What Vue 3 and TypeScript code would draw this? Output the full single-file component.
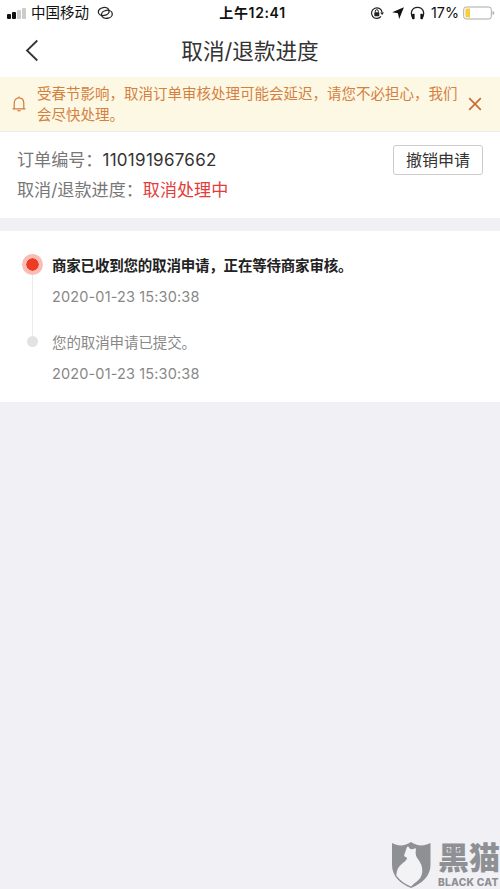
<script setup lang="ts">
interface Step {
  title: string
  time: string
  active: boolean
}

const orderNo = '110191967662'
const notice = '受春节影响，取消订单审核处理可能会延迟，请您不必担心，我们会尽快处理。'
const steps: Step[] = [
  { title: '商家已收到您的取消申请，正在等待商家审核。', time: '2020-01-23 15:30:38', active: true },
  { title: '您的取消申请已提交。', time: '2020-01-23 15:30:38', active: false },
]
</script>

<template>
  <div class="page">
    <header class="status">
      <div class="side">
        <span class="signal"><i class="b1"></i><i class="b2"></i><i class="b3 off"></i><i class="b4 off"></i></span>
        <span class="carrier">中国移动</span>
        <svg class="link" width="17" height="14" viewBox="0 0 17 14" fill="none" stroke="#222" stroke-width="1.3" stroke-linecap="round">
          <ellipse cx="6.700" cy="5.500" rx="5.400" ry="4" transform="rotate(-8 6.700 5.500)" />
          <ellipse cx="9.900" cy="8.300" rx="5.400" ry="4" transform="rotate(-8 9.900 8.300)" />
        </svg>
      </div>
      <div class="clock">上午12:41</div>
      <div class="side right">
        <svg width="14" height="14" viewBox="0 0 14 14" fill="none" stroke="#222" stroke-width="1.2">
          <path d="M11 10.400A5.300 5.300 0 1 1 12.100 6.500" />
          <path d="M10.200 6.400h3.800l-1.900 2.600z" fill="#222" stroke="none" />
          <rect x="4.300" y="6.300" width="5" height="3.900" rx=".6" fill="#222" stroke="none" />
          <path d="M5.300 6.500V5.200a1.500 1.500 0 0 1 3 0v1.300" stroke-width="1" />
        </svg>
        <svg class="arrow" width="12" height="12" viewBox="0 0 12 12"><path d="M11.900.2 7.200 11.900 5.900 6.300.2 5.200z" fill="#111" /></svg>
        <svg class="phones" width="15" height="14" viewBox="0 0 15 14" fill="none" stroke="#222" stroke-width="1.300">
          <path d="M2.700 12C-.1 6.900 1.700 1.300 7.500 1.300S15.100 6.900 12.300 12" />
          <rect x="2.100" y="7.800" width="2.500" height="5.400" rx=".7" fill="#111" stroke="none" />
          <rect x="10.400" y="7.800" width="2.500" height="5.400" rx=".7" fill="#111" stroke="none" />
        </svg>
        <span class="percent">17%</span>
        <svg class="battery" width="32" height="14" viewBox="0 0 32 14">
          <rect x=".7" y="1" width="27.600" height="12" rx="2.500" fill="#fff" stroke="#aaa" />
          <path d="M3.700 2.500H7v9H3.700a1.300 1.300 0 0 1-1.300-1.300V3.800a1.300 1.300 0 0 1 1.300-1.300z" fill="#f6cd3c" />
          <path d="M29.600 4.800q1.700.7 1.700 2.200t-1.700 2.200z" fill="#aaa" />
        </svg>
      </div>
    </header>

    <nav class="nav">
      <svg class="back" width="14" height="24" viewBox="0 0 14 24" fill="none" stroke="#333" stroke-width="1.800"><path d="M12.300 1.500 2 11.500l10.300 10" /></svg>
      <h1>取消/退款进度</h1>
    </nav>

    <section class="notice">
      <svg class="bell" width="14" height="17" viewBox="0 0 14 17" fill="none" stroke="#cf7b38" stroke-width="1.200">
        <path d="M.6 12.800H13.400M2.200 12.600V7.300C2.200 4 4 1.800 7 1.800s4.800 2.200 4.800 5.500v5.300M7 .6v1.200" />
        <path d="M5 14.200h4q-.5 1.400-2 1.400t-2-1.400z" fill="#cf7b38" stroke="none" />
      </svg>
      <p>{{ notice }}</p>
      <svg class="close" width="14" height="14" viewBox="0 0 14 14" stroke="#cb6b3a" stroke-width="1.700"><path d="M1.200 1.200 12.800 12.800M12.800 1.200 1.200 12.800" /></svg>
    </section>

    <section class="order">
      <div class="info">
        <div class="row"><span>订单编号：</span><span class="number">{{ orderNo }}</span></div>
        <div class="row"><span>取消/退款进度：</span><span class="state">取消处理中</span></div>
      </div>
      <button class="revoke" type="button">撤销申请</button>
    </section>

    <section class="timeline">
      <div v-for="step in steps" :key="step.title" class="step" :class="{ active: step.active }">
        <div class="rail"><i class="dot"></i></div>
        <div class="body">
          <div class="title">{{ step.title }}</div>
          <div class="time">{{ step.time }}</div>
        </div>
      </div>
    </section>

    <footer class="brand">
      <svg width="41" height="48" viewBox="0 0 41 48">
        <path d="M1 2C8 5.800 14 4.800 20 1c6 3.800 12 4.800 19.500 1V24C39.500 35 31 42.500 20 47 9 42.500 1 35 1 24z" fill="#8f9094" />
        <path d="M17 5.200 19.200 8 21.800 8.200 24.600 7C25.200 9 24.500 10.500 24.700 13 25 18 31.300 20.500 31.300 29.500 31.300 35 28.500 39 24.500 41.500 22.500 43 21 44.500 20 45.600 14 43 9 39.800 5.300 34.500 5.500 29 7.500 25.500 11 22.800 14.500 20 16.500 18.500 15.800 16.500 13.800 16.300 12.800 15.200 13.300 13.600 14 12 14.300 11 14.800 9.500 15.200 7.500 15.800 6 17 5.200z" fill="#f3f3f6" />
      </svg>
      <div class="words"><div class="cn">黑猫</div><div class="en">BLACK CAT</div></div>
    </footer>
  </div>
</template>

<style>
body {
  background: #f0f0f5;
}
</style>

<style scoped>
.page {
  width: 500px;
  height: 889px;
  overflow: hidden;
  display: flex;
  flex-direction: column;
  background: #f0f0f5;
  font-family: Inter, "Noto Sans CJK SC", sans-serif;
}
.status {
  display: grid;
  grid-template-columns: 1fr auto 1fr;
  align-items: center;
  height: 26px;
  padding: 0 5px 0 7px;
  background: #fff;
  color: #111;
  flex: none;
}
.side {
  display: flex;
  align-items: center;
}
.right {
  justify-content: flex-end;
}
.signal {
  display: flex;
  align-items: flex-end;
  gap: 1px;
  height: 11px;
}
.signal i {
  width: 4px;
  border-radius: 1px;
  background: #111;
}
.signal .off {
  background: #ccc;
}
.signal .b1 {
  height: 5px;
}
.signal .b2 {
  height: 7px;
}
.signal .b3 {
  height: 9px;
}
.signal .b4 {
  height: 11px;
}
.carrier {
  margin-left: 5px;
  font-size: 14.5px;
  line-height: 24px;
}
.link {
  margin-left: 8px;
}
.clock {
  padding-left: 3px;
  font-size: 14px;
  font-weight: 600;
  letter-spacing: 0.65px;
  line-height: 24px;
}
.arrow {
  margin-left: 8px;
}
.phones {
  margin-left: 6px;
}
.percent {
  margin: 0 4px 0 6px;
  font-size: 14.3px;
  line-height: 24px;
}
.nav {
  display: grid;
  grid-template-columns: 26px 1fr 26px;
  align-items: center;
  height: 51px;
  box-sizing: border-box;
  padding: 0 25px 2px;
  background: #fff;
  flex: none;
}
h1 {
  margin: 0;
  text-align: center;
  font-size: 21.6px;
  font-weight: 400;
  line-height: 32px;
  color: #333;
}
.notice {
  display: flex;
  align-items: center;
  height: 55px;
  box-sizing: border-box;
  padding: 0 18px 0 12px;
  border-bottom: 1px solid #eeeae4;
  background: #fdf8e4;
  flex: none;
}
.notice p {
  width: 424px;
  margin: 1px 7px 0 11px;
  font-size: 14.5px;
  line-height: 20.5px;
  color: #d4803f;
}
.bell,
.close {
  flex: none;
}
.order {
  display: flex;
  justify-content: space-between;
  align-items: flex-start;
  height: 86px;
  box-sizing: border-box;
  padding: 13px 17px 0 17px;
  background: #fff;
  flex: none;
}
.row {
  display: flex;
  height: 30px;
  font-size: 17.1px;
  line-height: 30px;
  color: #777;
  white-space: nowrap;
}
.number {
  color: #333;
  font-size: 17px;
  letter-spacing: 0.28px;
}
.state {
  color: #e43c3c;
}
.revoke {
  width: 90px;
  height: 30px;
  padding: 0;
  border: 1px solid #ccc;
  border-radius: 3px;
  background: #fff;
  font: 400 16px/26px Inter, "Noto Sans CJK SC", sans-serif;
  color: #333;
}
.timeline {
  height: 171px;
  box-sizing: border-box;
  margin-top: 13px;
  padding: 22px 20px 0 22px;
  background: #fff;
  flex: none;
}
.step {
  display: flex;
  gap: 9px;
  height: 78px;
}
.rail {
  width: 21px;
  display: flex;
  flex-direction: column;
  align-items: center;
}
.active .rail::after {
  content: "";
  flex: 1;
  width: 1px;
  margin-bottom: -6px;
  background: #ebebeb;
}
.dot {
  width: 11px;
  height: 11px;
  margin-top: 5px;
  border-radius: 50%;
  background: #e2e2e2;
}
.active .dot {
  width: 13px;
  height: 13px;
  margin-top: 1px;
  border: 4px solid #f9bdb6;
  background: #ee3b24;
  background-clip: padding-box;
}
.title {
  height: 24px;
  font-size: 14.5px;
  line-height: 24px;
  letter-spacing: -0.1px;
  color: #888;
}
.active .title {
  font-weight: 600;
  letter-spacing: -0.2px;
  line-height: 25px;
  color: #222;
}
.time {
  margin-top: 8px;
  font-size: 14.5px;
  line-height: 24px;
  letter-spacing: 0.14px;
  color: #888;
}
.step:not(.active) .time {
  margin-top: 7px;
}
.brand {
  display: flex;
  gap: 6px;
  margin-top: auto;
  padding: 0 0 0 391px;
  height: 48px;
  color: #8f9094;
}
.brand svg {
  flex: none;
}
.words {
  white-space: nowrap;
}
.cn {
  height: 35px;
  font-size: 31px;
  line-height: 33px;
  font-weight: 900;
}
.en {
  font-size: 10.2px;
  line-height: 12px;
  font-weight: 800;
  letter-spacing: 0.25px;
}
</style>
